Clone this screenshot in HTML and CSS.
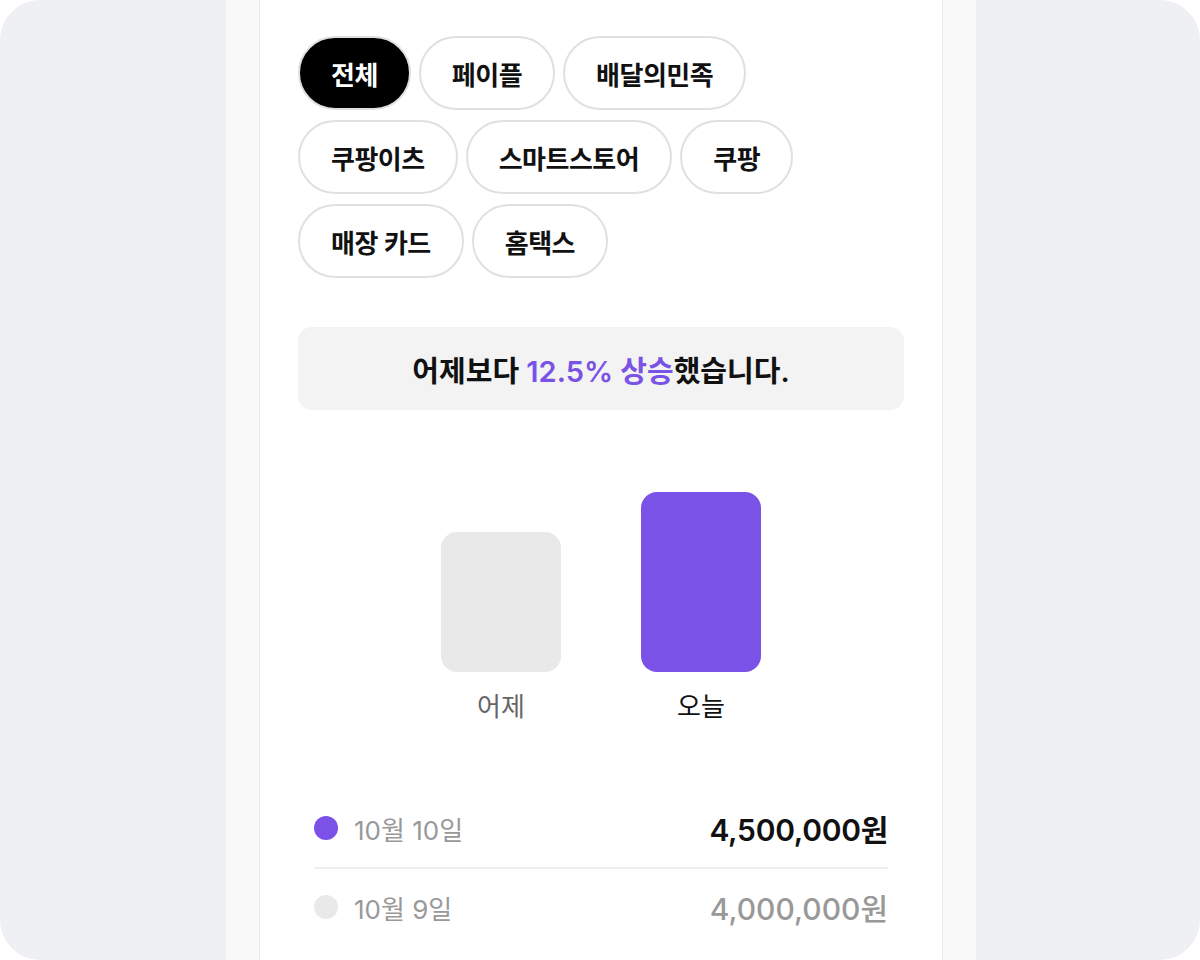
FILE: index.html
```html
<!DOCTYPE html>
<html lang="ko">
<head>
    <meta charset="UTF-8">
    <meta name="viewport" content="width=device-width, initial-scale=1.0">
    <title>매출 비교</title>
    <link rel="stylesheet" href="styles.css">
</head>
<body>
    <div class="frame">
        <div class="column">
            <main class="card">
                <div class="chips">
                    <button class="chip active">전체</button>
                    <button class="chip">페이플</button>
                    <button class="chip">배달의민족</button>
                    <button class="chip">쿠팡이츠</button>
                    <button class="chip">스마트스토어</button>
                    <button class="chip">쿠팡</button>
                    <button class="chip">매장 카드</button>
                    <button class="chip">홈택스</button>
                </div>

                <div class="summary">
                    어제보다 <span class="up">12.5% 상승</span>했습니다.
                </div>

                <div class="chart">
                    <div class="bar-col">
                        <div class="bars">
                            <div class="bar prev" style="height: 140px"></div>
                        </div>
                        <span class="bar-label">어제</span>
                    </div>
                    <div class="bar-col">
                        <div class="bars">
                            <div class="bar today" style="height: 180px"></div>
                        </div>
                        <span class="bar-label today-label">오늘</span>
                    </div>
                </div>

                <ul class="legend">
                    <li class="legend-row">
                        <span class="dot today"></span>
                        <span class="date">10월 10일</span>
                        <span class="amount">4,500,000원</span>
                    </li>
                    <li class="legend-row muted">
                        <span class="dot prev"></span>
                        <span class="date">10월 9일</span>
                        <span class="amount">4,000,000원</span>
                    </li>
                </ul>
            </main>
        </div>
    </div>
</body>
</html>
```

FILE: styles.css
```css
* {
    margin: 0;
    padding: 0;
    box-sizing: border-box;
}

html, body {
    background: #fff;
}

body {
    font-family: 'Inter', 'Noto Sans CJK KR', sans-serif;
    color: #111;
}

.frame {
    width: 1200px;
    height: 960px;
    background: #eff0f4;
    border-radius: 40px;
    overflow: hidden;
}

.column {
    width: 750px;
    height: 100%;
    margin: 0 auto;
    background: #f9f9f9;
    position: relative;
    left: 1px;
}

.card {
    width: 684px;
    height: 100%;
    margin: 0 auto;
    background: #fff;
    border-left: 1px solid #ececec;
    border-right: 1px solid #ececec;
    padding: 36px 38px 0;
}

/* filter chips */
.chips {
    display: flex;
    flex-wrap: wrap;
    gap: 10px 8px;
}

.chip {
    height: 74px;
    padding: 0 31px;
    border: 2px solid #e0e0e0;
    border-radius: 37px;
    background: #fff;
    color: #111;
    font-family: inherit;
    font-size: 26px;
    font-weight: 600;
    letter-spacing: -0.5px;
    cursor: pointer;
}

.chip.active {
    background: #000;
    color: #fff;
}

/* summary */
.summary {
    margin-top: 49px;
    height: 83px;
    display: flex;
    align-items: center;
    justify-content: center;
    background: #f3f3f3;
    border-radius: 14px;
    font-size: 29px;
    font-weight: 600;
    color: #111;
}

.summary .up {
    color: #7a52e6;
    margin-left: 0.25em;
}

/* bar chart */
.chart {
    display: flex;
    justify-content: center;
    gap: 80px;
    padding-top: 82px;
}

.bar-col {
    display: flex;
    flex-direction: column;
    align-items: center;
    width: 120px;
}

.bars {
    height: 180px;
    width: 100%;
    display: flex;
    align-items: flex-end;
}

.bar {
    width: 100%;
    border-radius: 16px;
}

.bar.prev {
    background: #e9e9e9;
}

.bar.today {
    background: #7a52e8;
}

.bar-label {
    margin-top: 19px;
    font-size: 26px;
    line-height: 32px;
    color: #666;
}

.bar-label.today-label {
    color: #111;
}

/* legend */
.legend {
    list-style: none;
    margin-top: 66px;
    padding: 0 16px;
}

.legend-row {
    display: flex;
    align-items: center;
    height: 78px;
}

.legend-row + .legend-row {
    border-top: 2px solid #eeeeee;
}

.dot {
    width: 24px;
    height: 24px;
    border-radius: 50%;
    margin-right: 16px;
}

.dot.today {
    background: #7a52e8;
}

.dot.prev {
    background: #e9e9e9;
}

.date {
    font-size: 26px;
    color: #999;
}

.amount {
    margin-left: auto;
    font-size: 30px;
    font-weight: 600;
    letter-spacing: -0.3px;
    color: #111;
}

.legend-row.muted .amount {
    color: #999;
    font-weight: 500;
    letter-spacing: 0;
}
```
